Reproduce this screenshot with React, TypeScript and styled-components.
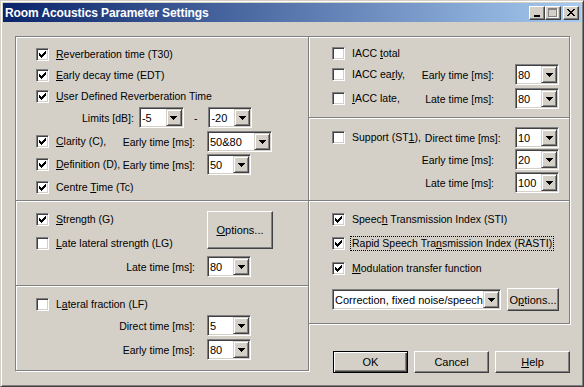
import React from 'react';
import styled, { createGlobalStyle } from 'styled-components';

const GlobalStyle = createGlobalStyle`
  html, body {
    margin: 0;
    padding: 0;
    background: #d4d0c8;
  }
  body {
    font-family: "Liberation Sans", Arial, sans-serif;
    font-size: 10.5px;
    color: #000;
  }
`;

const Window = styled.div`
  width: 584px;
  height: 387px;
  box-sizing: border-box;
  background: #d4d0c8;
  border: 1px solid;
  border-color: #d4d0c8 #404040 #404040 #d4d0c8;
  box-shadow: inset 1px 1px #fff, inset -1px -1px #808080;
  padding: 2px;
  display: flex;
  flex-direction: column;
`;

const TitleBar = styled.div`
  height: 19px;
  display: flex;
  align-items: center;
  padding: 0 2px 0 2px;
  background: linear-gradient(to right, #0a246a, #a6caf0);
`;

const Title = styled.div`
  flex: 1;
  color: #fff;
  font-weight: bold;
  font-size: 12px;
  letter-spacing: -0.1px;
  white-space: nowrap;
`;

const TitleButton = styled.div<{ $gap?: number }>`
  width: 16px;
  height: 14px;
  box-sizing: border-box;
  margin-left: ${p => p.$gap ?? 0}px;
  background: #d4d0c8;
  border: 1px solid;
  border-color: #fff #404040 #404040 #fff;
  box-shadow: inset -1px -1px #808080;
  display: flex;
  align-items: center;
  justify-content: center;
  svg { display: block; }
`;

const Body = styled.div`
  display: flex;
  align-items: flex-start;
  padding: 14px 0 0 12px;
`;

const Column = styled.div<{ $w: number; $overlap?: boolean }>`
  width: ${p => p.$w}px;
  margin-left: ${p => (p.$overlap ? -1 : 0)}px;
  display: flex;
  flex-direction: column;
`;

const Group = styled.div<{ $h: number; $pt: number; $stacked?: boolean }>`
  height: ${p => p.$h}px;
  box-sizing: border-box;
  margin-top: ${p => (p.$stacked ? -1 : 0)}px;
  padding-top: ${p => p.$pt}px;
  border: 1px solid #808080;
  box-shadow: inset 1px 1px #fff, 1px 1px #fff;
  display: flex;
  flex-direction: column;
`;

const Row = styled.div<{ $mt?: number; $pl: number }>`
  height: 21px;
  margin-top: ${p => p.$mt ?? 0}px;
  padding-left: ${p => p.$pl}px;
  display: flex;
  align-items: center;
  white-space: nowrap;
`;

const Lead = styled.div<{ $w: number }>`
  width: ${p => p.$w}px;
  display: flex;
  align-items: center;
  justify-content: space-between;
`;

const Caption = styled.span<{ $gap?: number }>`
  margin-right: ${p => p.$gap ?? 0}px;
`;

const Key = styled.span`
  text-decoration: underline;
`;

const CheckWrap = styled.label`
  display: flex;
  align-items: center;
  gap: 7px;
`;

const Box = styled.span`
  width: 13px;
  height: 13px;
  box-sizing: border-box;
  background: #fff;
  border: 1px solid;
  border-color: #808080 #fff #fff #808080;
  box-shadow: inset 1px 1px #404040, inset -1px -1px #d4d0c8;
  display: flex;
  align-items: center;
  justify-content: center;
  svg { display: block; }
`;

const Focused = styled.span<{ $focus?: boolean }>`
  padding: 0 1px;
  margin-left: -1px;
  outline: ${p => (p.$focus ? '1px dotted #000' : 'none')};
  line-height: 13px;
`;

const ComboFrame = styled.div<{ $w: number; $gap?: number }>`
  width: ${p => p.$w}px;
  height: 21px;
  margin-left: ${p => p.$gap ?? 0}px;
  box-sizing: border-box;
  background: #fff;
  border: 1px solid;
  border-color: #808080 #fff #fff #808080;
  box-shadow: inset 1px 1px #404040, inset -1px -1px #d4d0c8;
  padding: 1px;
  display: flex;
`;

const ComboText = styled.div`
  flex: 1;
  display: flex;
  align-items: center;
  padding-left: 1px;
  font-size: 11px;
  overflow: hidden;
  white-space: nowrap;
`;

const ArrowButton = styled.div`
  width: 16px;
  flex-shrink: 0;
  box-sizing: border-box;
  background: #d4d0c8;
  border: 1px solid;
  border-color: #d4d0c8 #404040 #404040 #d4d0c8;
  box-shadow: inset 1px 1px #fff, inset -1px -1px #808080;
  display: flex;
  align-items: center;
  justify-content: center;
  svg { display: block; }
`;

const Button = styled.div<{ $w: number; $h: number; $mt?: number; $ml?: number; $default?: boolean }>`
  width: ${p => p.$w}px;
  height: ${p => p.$h}px;
  margin-top: ${p => p.$mt ?? 0}px;
  margin-left: ${p => p.$ml ?? 0}px;
  flex-shrink: 0;
  box-sizing: border-box;
  background: #d4d0c8;
  font-size: 11px;
  display: flex;
  align-items: center;
  justify-content: center;
  border: 1px solid;
  border-color: ${p => (p.$default ? '#000' : '#fff #404040 #404040 #fff')};
  box-shadow: ${p =>
    p.$default
      ? 'inset 1px 1px #fff, inset -1px -1px #404040, inset -2px -2px #808080'
      : 'inset -1px -1px #808080'};
`;

const TopArea = styled.div`
  display: flex;
  align-items: flex-start;
`;

const Stack = styled.div<{ $w: number }>`
  width: ${p => p.$w}px;
  display: flex;
  flex-direction: column;
  gap: 3px;
`;

const Dash = styled.span`
  margin: 0 11px 0 10px;
`;

const ButtonRow = styled.div`
  display: flex;
  justify-content: flex-end;
  gap: 6px;
  margin-top: 27px;
`;

const CheckMark = () => (
  <svg width="7" height="7" viewBox="0 0 7 7" shapeRendering="crispEdges">
    <rect x="6" y="0" width="1" height="1" />
    <rect x="5" y="1" width="2" height="1" />
    <rect x="0" y="2" width="1" height="1" />
    <rect x="4" y="2" width="3" height="1" />
    <rect x="0" y="3" width="2" height="1" />
    <rect x="3" y="3" width="3" height="1" />
    <rect x="0" y="4" width="5" height="1" />
    <rect x="1" y="5" width="3" height="1" />
    <rect x="2" y="6" width="1" height="1" />
  </svg>
);

const DownArrow = () => (
  <svg width="7" height="4" viewBox="0 0 7 4" shapeRendering="crispEdges">
    <rect x="0" y="0" width="7" height="1" />
    <rect x="1" y="1" width="5" height="1" />
    <rect x="2" y="2" width="3" height="1" />
    <rect x="3" y="3" width="1" height="1" />
  </svg>
);

const Check = ({ checked, focus, children }: { checked?: boolean; focus?: boolean; children: React.ReactNode }) => (
  <CheckWrap>
    <Box>{checked ? <CheckMark /> : null}</Box>
    <Focused $focus={focus}>{children}</Focused>
  </CheckWrap>
);

const Combo = ({ value, w = 44, gap }: { value: string; w?: number; gap?: number }) => (
  <ComboFrame $w={w} $gap={gap}>
    <ComboText>{value}</ComboText>
    <ArrowButton>
      <DownArrow />
    </ArrowButton>
  </ComboFrame>
);

const App = () => {
  return (
    <>
      <GlobalStyle />
      <Window>
        <TitleBar>
          <Title>Room Acoustics Parameter Settings</Title>
          <TitleButton>
            <svg width="8" height="9" viewBox="0 0 8 9" shapeRendering="crispEdges">
              <rect x="1" y="7" width="6" height="2" />
            </svg>
          </TitleButton>
          <TitleButton>
            <svg width="10" height="10" viewBox="0 0 10 10" shapeRendering="crispEdges">
              <rect x="1" y="1" width="9" height="9" fill="#fff" />
              <rect x="0" y="0" width="9" height="2" fill="#808080" />
              <rect x="0" y="0" width="1" height="9" fill="#808080" />
              <rect x="8" y="0" width="1" height="9" fill="#808080" />
              <rect x="0" y="8" width="9" height="1" fill="#808080" />
              <rect x="1" y="2" width="7" height="6" fill="#d4d0c8" />
            </svg>
          </TitleButton>
          <TitleButton $gap={2}>
            <svg width="8" height="7" viewBox="0 0 8 7" shapeRendering="crispEdges">
              <path d="M0 0h2v1h-2zM6 0h2v1h-2zM1 1h2v1h-2zM5 1h2v1h-2zM2 2h4v1h-4zM3 3h2v1h-2zM2 4h4v1h-4zM1 5h2v1h-2zM5 5h2v1h-2zM0 6h2v1h-2zM6 6h2v1h-2z" />
            </svg>
          </TitleButton>
        </TitleBar>

        <Body>
          <Column $w={294}>
            <Group $h={165} $pt={7}>
              <Row $pl={20}>
                <Check checked><Key>R</Key>everberation time (T30)</Check>
              </Row>
              <Row $pl={20}>
                <Check checked><Key>E</Key>arly decay time (EDT)</Check>
              </Row>
              <Row $pl={20}>
                <Check checked><Key>U</Key>ser Defined Reverberation Time</Check>
              </Row>
              <Row $pl={66}>
                <Caption $gap={5}>Limits [dB]:</Caption>
                <Combo value="-5" w={45} />
                <Dash>-</Dash>
                <Combo value="-20" />
              </Row>
              <Row $pl={20} $mt={3}>
                <Lead $w={159}>
                  <Check checked><Key>C</Key>larity (C),</Check>
                  <Caption>Early time [ms]:</Caption>
                </Lead>
                <Combo value="50&80" w={65} gap={12} />
              </Row>
              <Row $pl={20} $mt={2}>
                <Lead $w={159}>
                  <Check checked><Key>D</Key>efinition (D),</Check>
                  <Caption>Early time [ms]:</Caption>
                </Lead>
                <Combo value="50" gap={12} />
              </Row>
              <Row $pl={20} $mt={2}>
                <Check checked>Centre <Key>T</Key>ime (Tc)</Check>
              </Row>
            </Group>

            <Group $h={86} $pt={8} $stacked>
              <TopArea>
                <Stack $w={191}>
                  <Row $pl={20}>
                    <Check checked><Key>S</Key>trength (G)</Check>
                  </Row>
                  <Row $pl={20}>
                    <Check><Key>L</Key>ate lateral strength (LG)</Check>
                  </Row>
                </Stack>
                <Button $w={66} $h={38} $mt={2}>
                  <span><Key>O</Key>ptions...</span>
                </Button>
              </TopArea>
              <Row $pl={20} $mt={2}>
                <Lead $w={159}>
                  <span />
                  <Caption>Late time [ms]:</Caption>
                </Lead>
                <Combo value="80" gap={12} />
              </Row>
            </Group>

            <Group $h={86} $pt={8} $stacked>
              <Row $pl={20}>
                <Check>L<Key>a</Key>teral fraction (LF)</Check>
              </Row>
              <Row $pl={20}>
                <Lead $w={159}>
                  <span />
                  <Caption>Direct time [ms]:</Caption>
                </Lead>
                <Combo value="5" gap={12} />
              </Row>
              <Row $pl={20} $mt={3}>
                <Lead $w={159}>
                  <span />
                  <Caption>Early time [ms]:</Caption>
                </Lead>
                <Combo value="80" gap={12} />
              </Row>
            </Group>
          </Column>

          <Column $w={262} $overlap>
            <Group $h={82} $pt={6}>
              <Row $pl={23}>
                <Check>IACC <Key>t</Key>otal</Check>
              </Row>
              <Row $pl={23}>
                <Lead $w={162}>
                  <Check>IACC ea<Key>r</Key>ly,</Check>
                  <Caption>Early time [ms]:</Caption>
                </Lead>
                <Combo value="80" gap={21} />
              </Row>
              <Row $pl={23} $mt={3}>
                <Lead $w={162}>
                  <Check><Key>I</Key>ACC late,</Check>
                  <Caption>Late time [ms]:</Caption>
                </Lead>
                <Combo value="80" gap={21} />
              </Row>
            </Group>

            <Group $h={84} $pt={9} $stacked>
              <Row $pl={23}>
                <Lead $w={162}>
                  <Check>Support (ST<Key>1</Key>),{'\u00a0'}</Check>
                  <Caption>Direct time [ms]:</Caption>
                </Lead>
                <Combo value="10" gap={21} />
              </Row>
              <Row $pl={23} $mt={1}>
                <Lead $w={162}>
                  <span />
                  <Caption>Early time [ms]:</Caption>
                </Lead>
                <Combo value="20" gap={21} />
              </Row>
              <Row $pl={23} $mt={2}>
                <Lead $w={162}>
                  <span />
                  <Caption>Late time [ms]:</Caption>
                </Lead>
                <Combo value="100" gap={21} />
              </Row>
            </Group>

            <Group $h={124} $pt={8} $stacked>
              <Row $pl={23}>
                <Check checked>Speec<Key>h</Key> Transmission Index (STI)</Check>
              </Row>
              <Row $pl={23} $mt={3}>
                <Check checked focus>Rapid Speech Tra<Key>n</Key>smission Index (RASTI)</Check>
              </Row>
              <Row $pl={23} $mt={4}>
                <Check checked><Key>M</Key>odulation transfer function</Check>
              </Row>
              <Row $pl={23} $mt={10}>
                <Combo value="Correction, fixed noise/speech" w={169} />
                <Button $w={52} $h={23} $ml={6}>
                  <span>O<Key>p</Key>tions...</span>
                </Button>
              </Row>
            </Group>

            <ButtonRow>
              <Button $w={75} $h={22} $default>OK</Button>
              <Button $w={75} $h={22}>Cancel</Button>
              <Button $w={75} $h={22}><span><Key>H</Key>elp</span></Button>
            </ButtonRow>
          </Column>
        </Body>
      </Window>
    </>
  );
};

export default App;
